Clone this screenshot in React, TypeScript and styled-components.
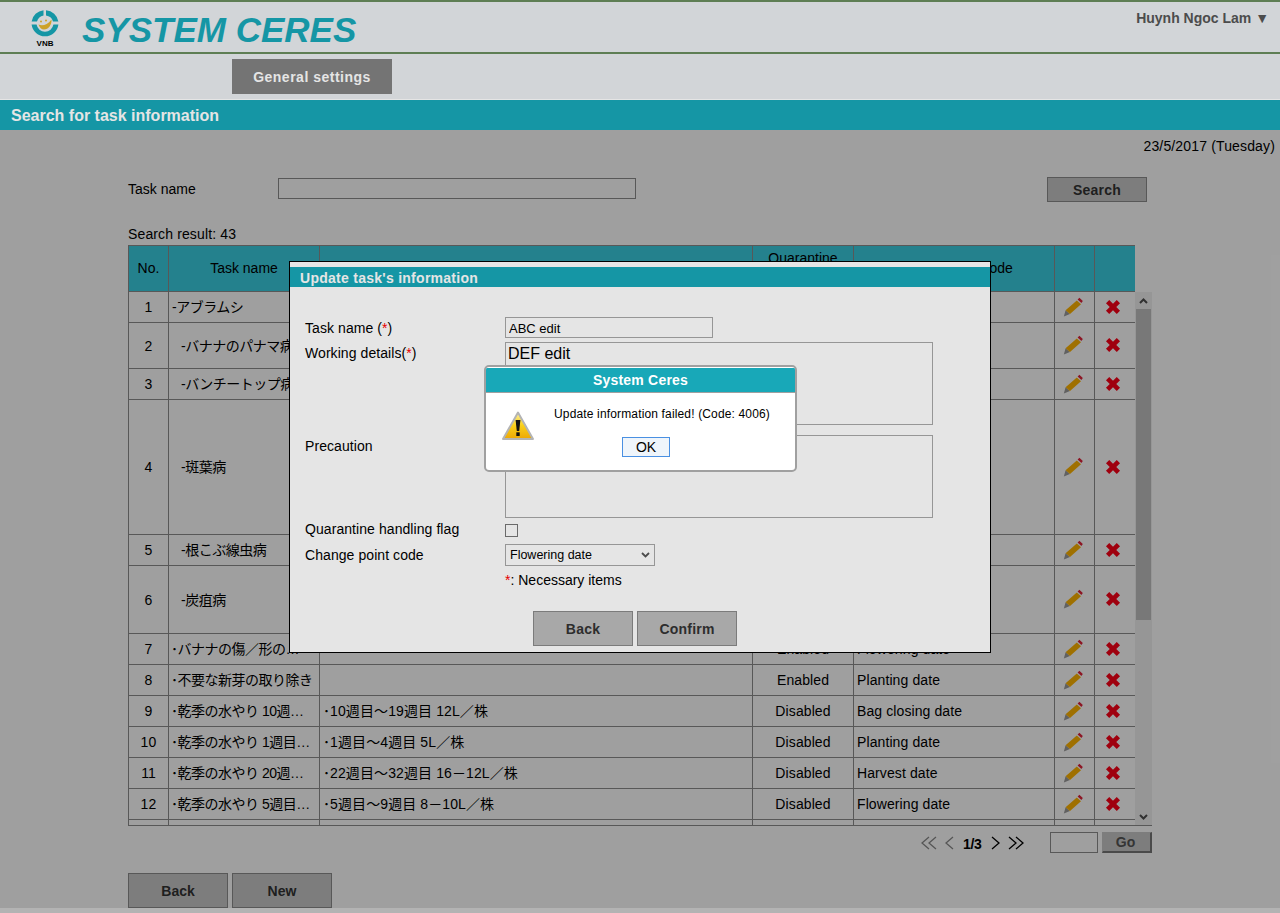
import styled, { createGlobalStyle } from 'styled-components';

const TEAL = '#18a8b8';
const FONT = '"Liberation Sans", Arial, sans-serif';
const JP_FONT = '"Liberation Sans", "Noto Sans CJK JP", sans-serif';
const SELECT_ARROW =
  "url(\"data:image/svg+xml,%3Csvg xmlns='http://www.w3.org/2000/svg' width='9' height='6'%3E%3Cpath d='M1 1L4.5 4.5L8 1' fill='none' stroke='%23555' stroke-width='1.8'/%3E%3C/svg%3E\")";

const GlobalStyle = createGlobalStyle`
  html, body {
    margin: 0;
    padding: 0;
    height: 913px;
    overflow: hidden;
    background: #fff;
    font-family: ${FONT};
    font-size: 14px;
    color: #000;
  }
  * { box-sizing: border-box; }
`;

const Page = styled.div`
  position: relative;
  width: 1280px;
  height: 913px;
  overflow: hidden;
`;

const Header = styled.header`
  display: flex;
  align-items: flex-start;
  height: 54px;
  background: #eaeef1;
  border-top: 2px solid #698d5e;
  border-bottom: 2px solid #698d5e;
`;

const LogoBox = styled.div`
  display: flex;
  flex-direction: column;
  align-items: center;
  width: 30px;
  margin: 7px 0 0 30px;
`;

const LogoLabel = styled.span`
  font-size: 8px;
  font-weight: 700;
  line-height: 8px;
  margin-top: 1px;
`;

const SystemTitle = styled.h1`
  margin: 7px 0 0 22px;
  font-size: 35px;
  line-height: 42px;
  font-style: italic;
  font-weight: 700;
  color: ${TEAL};
`;

const UserMenu = styled.div`
  margin: 8px 11px 0 auto;
  font-size: 14px;
  font-weight: 700;
  line-height: 16px;
  color: #555;
`;

const NavBar = styled.nav`
  height: 45px;
  padding: 5px 0 0 232px;
  background: #eaeef1;
`;

const NavButton = styled.button`
  width: 160px;
  height: 35px;
  border: 0;
  background: #828282;
  color: #fff;
  font: 700 14px ${FONT};
  letter-spacing: 0.5px;
`;

const TitleBar = styled.div`
  height: 31px;
  border-top: 1px solid #fff;
  padding-left: 11px;
  background: ${TEAL};
  color: #fff;
  font-size: 16px;
  font-weight: 700;
  line-height: 31px;
`;

const Main = styled.main`
  height: 778px;
  padding-left: 128px;
  background: #fff;
`;

const DateLine = styled.div`
  height: 47px;
  padding: 8px 5px 0 0;
  line-height: 16px;
  letter-spacing: 0.15px;
  text-align: right;
`;

const SearchRow = styled.div`
  display: flex;
  align-items: flex-start;
  width: 1019px;
  height: 25px;
`;

const SearchLabel = styled.label`
  width: 150px;
  line-height: 24px;
`;

const SearchInput = styled.input`
  width: 358px;
  height: 21px;
  margin-top: 1px;
  border: 1px solid #8f8f8f;
  background: #fff;
`;

const SearchButton = styled.button`
  width: 100px;
  height: 25px;
  margin-left: auto;
  border: 1px solid #8f8f8f;
  background: #c9c9c9;
  color: #333;
  font: 700 14px ${FONT};
  letter-spacing: 0.2px;
`;

const ResultCount = styled.div`
  height: 19px;
  margin-top: 24px;
  line-height: 16px;
  letter-spacing: 0.13px;
`;

const TableArea = styled.div`
  display: flex;
  align-items: flex-end;
  width: 1024px;
  height: 581px;
  border-bottom: 1px solid #8f8f8f;
`;

const TableClip = styled.div`
  width: 1007px;
  height: 580px;
  overflow: hidden;
`;

const TaskTable = styled.table`
  width: 1007px;
  table-layout: fixed;
  border-collapse: collapse;
  font-family: ${JP_FONT};
`;

const HeadCell = styled.th`
  height: 46px;
  padding: 0;
  border: 1px solid #8f8f8f;
  background: #3bcee1;
  font-weight: 400;
  line-height: 21px;
  text-align: center;
`;

const Cell = styled.td<{ $center?: boolean }>`
  padding: 0 3px;
  border: 1px solid #8f8f8f;
  white-space: nowrap;
  overflow: hidden;
  letter-spacing: 0.1px;
  text-align: ${(props) => (props.$center ? 'center' : 'left')};
`;

const NameCell = styled(Cell)<{ $indent: number }>`
  padding: 0 0 2px ${(props) => props.$indent}px;
  letter-spacing: -0.5px;
`;

const WorkCell = styled(Cell)`
  padding: 0 0 2px 3px;
`;

const IconCell = styled.td<{ $shift: number }>`
  padding: 2px ${(props) => props.$shift}px 0 0;
  border: 1px solid #8f8f8f;
  text-align: center;
`;

const ScrollBar = styled.div`
  display: flex;
  flex-direction: column;
  width: 17px;
  height: 533px;
  background: #f1f1f1;
`;

const ScrollArrow = styled.div`
  display: flex;
  align-items: center;
  justify-content: center;
  height: 17px;
`;

const ScrollThumb = styled.div`
  height: 311px;
  margin: 0 1px;
  background: #c1c1c1;
`;

const ScrollSpace = styled.div`
  flex: 1;
`;

const PagerRow = styled.div`
  display: flex;
  align-items: center;
  width: 1024px;
  height: 21px;
  margin-top: 6px;
  padding-left: 793px;
`;

const PageNumber = styled.span`
  width: 20px;
  margin: 2px 8px 0;
  font-size: 14px;
  font-weight: 700;
  white-space: nowrap;
  letter-spacing: -0.3px;
`;

const PagerIcon = styled.svg<{ $gap?: number }>`
  display: block;
  margin-right: ${(props) => props.$gap ?? 0}px;
`;

const PageInput = styled.input`
  width: 48px;
  height: 21px;
  margin-left: 25px;
  border: 1px solid #8f8f8f;
  background: #fff;
`;

const GoButton = styled.button`
  width: 50px;
  height: 21px;
  margin-left: 4px;
  padding: 0 2px 0 0;
  border: 1px solid #c9c9c9;
  border-right: 2px solid #777;
  border-bottom: 2px solid #777;
  background: #c9c9c9;
  color: #555;
  font: 700 14px ${FONT};
`;

const ActionRow = styled.div`
  display: flex;
  gap: 4px;
  margin-top: 20px;
`;

const ActionButton = styled.button`
  width: 100px;
  height: 35px;
  border: 1px solid #8f8f8f;
  background: #c9c9c9;
  color: #333;
  font: 700 14px ${FONT};
`;

const PageFoot = styled.div`
  height: 5px;
  background: #c8c8c8;
`;

const ModalShade = styled.div`
  position: absolute;
  left: 0;
  right: 0;
  top: 130px;
  height: 778px;
  background: rgba(0, 0, 0, 0.3);
`;

const Modal = styled.section`
  position: absolute;
  left: 289px;
  top: 261px;
  width: 702px;
  height: 392px;
  padding-top: 5px;
  border: 1px solid #000;
  background: #fff;
`;

const ModalTitle = styled.h2`
  height: 20px;
  margin: 0;
  padding-left: 10px;
  background: ${TEAL};
  color: #fff;
  font-size: 14px;
  font-weight: 700;
  letter-spacing: 0.27px;
  line-height: 22px;
`;

const ModalForm = styled.div`
  padding: 30px 0 0 15px;
`;

const FieldRow = styled.div<{ $height: number }>`
  display: flex;
  align-items: flex-start;
  height: ${(props) => props.$height}px;
`;

const FieldLabel = styled.label<{ $top?: number }>`
  width: 200px;
  margin-top: ${(props) => props.$top ?? 3}px;
  line-height: 16px;
  letter-spacing: 0.07px;
`;

const Required = styled.span`
  color: #f00;
`;

const TextField = styled.input`
  width: 208px;
  height: 21px;
  padding: 1px 3px 0;
  border: 1px solid #a8a8a8;
  background: #fff;
  font: 13px ${FONT};
  color: #000;
`;

const TextBlock = styled.textarea`
  width: 428px;
  height: 83px;
  padding: 2px;
  border: 1px solid #a8a8a8;
  background: #fff;
  font: 16px ${FONT};
  color: #000;
  resize: none;
`;

const CheckBox = styled.input`
  width: 13px;
  height: 13px;
  margin: 1px 0 0;
  appearance: none;
  border: 1px solid #767676;
  background: #fff;
`;

const SelectBox = styled.select`
  width: 150px;
  height: 22px;
  padding: 0 0 0 4px;
  appearance: none;
  border: 1px solid #a8a8a8;
  border-radius: 0;
  background: #fff ${SELECT_ARROW} no-repeat right 4px center;
  font: 12.5px ${FONT};
  color: #000;
`;

const NoteLine = styled.div`
  margin: 6px 0 0 200px;
  line-height: 16px;
`;

const ModalActions = styled.div`
  display: flex;
  gap: 4px;
  margin: 23px 0 0 228px;
`;

const ModalButton = styled.button`
  width: 100px;
  height: 35px;
  border: 1px solid #8a8a8a;
  background: #bcbcbc;
  color: #333;
  font: 700 14px ${FONT};
  letter-spacing: 0.2px;
`;

const AlertShade = styled.div`
  position: absolute;
  inset: 0;
  background: rgba(0, 0, 0, 0.1);
`;

const AlertBox = styled.div`
  position: absolute;
  left: 484px;
  top: 365px;
  width: 313px;
  height: 107px;
  padding-top: 1px;
  border: 2px solid #a0a0a0;
  border-radius: 5px;
  background: #fff;
  overflow: hidden;
`;

const AlertTitle = styled.div`
  height: 25px;
  border-bottom: 1px solid #a0a0a0;
  background: ${TEAL};
  color: #fff;
  font-size: 14px;
  font-weight: 700;
  letter-spacing: 0.2px;
  line-height: 24px;
  text-align: center;
`;

const AlertBody = styled.div`
  display: flex;
  align-items: flex-start;
  padding: 14px 0 0 16px;
`;

const AlertIcon = styled.svg`
  display: block;
  margin-top: 4px;
`;

const AlertContent = styled.div`
  display: flex;
  flex-direction: column;
  align-items: center;
  width: 256px;
`;

const AlertText = styled.div`
  font-size: 12px;
  letter-spacing: 0.15px;
  line-height: 14px;
`;

const AlertButton = styled.button`
  width: 48px;
  height: 20px;
  margin: 16px 32px 0 0;
  padding: 0;
  border: 1px solid #4a90e2;
  background: #eff5fb;
  font: 14px ${FONT};
  color: #000;
`;

const Row = styled.tr<{ $height: number }>`
  height: ${(props) => props.$height}px;
`;

function LogoMark() {
  return (
    <svg width="30" height="30" viewBox="0 0 30 30">
      <path d="M13.5 1.2A13.5 13.5 0 0 0 1.6 12.5L7 12.5A8.5 8.5 0 0 1 13.5 6.6Z" fill="#18a8b8" />
      <path d="M16 1.2A13.5 13.5 0 0 1 28.4 12.5L23 12.5A8.5 8.5 0 0 0 16 6.6Z" fill="#18a8b8" />
      <path d="M1.6 15.5A13.5 13.5 0 0 0 28.4 15.5L23.4 15.5A8.5 8.5 0 0 1 6.6 15.5Z" fill="#18a8b8" />
      <path d="M8.5 15.5C12 17 17 16.5 21.5 10.5C22 15.5 18.5 20.5 14 20.5C11.5 20.5 9.5 18.5 8.5 15.5Z" fill="#e5b52c" />
      <circle cx="11" cy="12.5" r="1" fill="#e5b52c" />
      <circle cx="16" cy="11.5" r="1" fill="#e5b52c" />
    </svg>
  );
}

function PencilIcon() {
  return (
    <svg width="20" height="20" viewBox="0 0 20 20">
      <path d="M0.8 19.5L2.6 13.2L7 17Z" fill="#9c9c9c" />
      <path d="M2.6 13.2L13.8 3.4L18 7.2L7 17Z" fill="#ffb400" />
      <path d="M14.6 2.6L16.4 0.8L19.8 3.9L18.4 5.9Z" fill="#e0243c" />
    </svg>
  );
}

function DeleteIcon() {
  return (
    <svg width="18" height="18" viewBox="0 0 18 18">
      <path d="M3.6 3.6L14.4 14.4M14.4 3.6L3.6 14.4" fill="none" stroke="#ff0018" strokeWidth="4.6" />
    </svg>
  );
}

function WarningIcon() {
  return (
    <AlertIcon width="32" height="30" viewBox="0 0 32 30">
      <defs>
        <linearGradient id="warn-fill" x1="0" y1="0" x2="0" y2="1">
          <stop offset="0" stopColor="#fdf0a0" />
          <stop offset="0.5" stopColor="#f9cf1a" />
          <stop offset="1" stopColor="#eda705" />
        </linearGradient>
      </defs>
      <path d="M16 1.5L31 28H1Z" fill="url(#warn-fill)" stroke="#b4b4b4" strokeWidth="2" strokeLinejoin="round" />
      <path d="M13.6 9H18.4L17.2 20H14.8Z" fill="#111" />
      <rect x="14.3" y="21.3" width="3.4" height="3.7" fill="#111" />
    </AlertIcon>
  );
}

function Chevrons({ count, left, color, gap }: { count: number; left?: boolean; color: string; gap: number }) {
  const width = count === 2 ? 17 : 10;
  const points = count === 2 ? [1, 8] : [1];
  return (
    <PagerIcon $gap={gap} width={width} height="14" viewBox={`0 0 ${width} 14`}>
      {points.map((x) => (
        <path
          key={x}
          d={left ? `M${x + 7} 1L${x} 7L${x + 7} 13` : `M${x} 1L${x + 7} 7L${x} 13`}
          fill="none"
          stroke={color}
          strokeWidth="1.3"
        />
      ))}
    </PagerIcon>
  );
}

function ArrowGlyph({ down }: { down?: boolean }) {
  return (
    <svg width="9" height="6" viewBox="0 0 9 6">
      <path d={down ? 'M1 1L4.5 4.5L8 1' : 'M1 5L4.5 1.5L8 5'} fill="none" stroke="#505050" strokeWidth="2" />
    </svg>
  );
}

const ROWS = [
  { no: '1', height: 31, indent: 3, name: '-アブラムシ', work: '', flag: 'Disabled', code: 'Planting date' },
  { no: '2', height: 46, indent: 12, name: '-バナナのパナマ病', work: '', flag: 'Disabled', code: 'Planting date' },
  { no: '3', height: 31, indent: 12, name: '-バンチートップ病', work: '', flag: 'Disabled', code: 'Planting date' },
  { no: '4', height: 135, indent: 12, name: '-斑葉病', work: '', flag: 'Disabled', code: 'Planting date' },
  { no: '5', height: 31, indent: 12, name: '-根こぶ線虫病', work: '', flag: 'Disabled', code: 'Planting date' },
  { no: '6', height: 68, indent: 12, name: '-炭疽病', work: '', flag: 'Disabled', code: 'Planting date' },
  { no: '7', height: 31, indent: 2, name: '･バナナの傷／形の…', work: '', flag: 'Enabled', code: 'Flowering date' },
  { no: '8', height: 31, indent: 2, name: '･不要な新芽の取り除き', work: '', flag: 'Enabled', code: 'Planting date' },
  { no: '9', height: 31, indent: 2, name: '･乾季の水やり 10週…', work: '･10週目～19週目 12L／株', flag: 'Disabled', code: 'Bag closing date' },
  { no: '10', height: 31, indent: 2, name: '･乾季の水やり 1週目…', work: '･1週目～4週目 5L／株', flag: 'Disabled', code: 'Planting date' },
  { no: '11', height: 31, indent: 2, name: '･乾季の水やり 20週…', work: '･22週目～32週目 16－12L／株', flag: 'Disabled', code: 'Harvest date' },
  { no: '12', height: 31, indent: 2, name: '･乾季の水やり 5週目…', work: '･5週目～9週目 8－10L／株', flag: 'Disabled', code: 'Flowering date' },
];

export default function App(): JSX.Element {
  return (
    <Page>
      <GlobalStyle />
      <Header>
        <LogoBox>
          <LogoMark />
          <LogoLabel>VNB</LogoLabel>
        </LogoBox>
        <SystemTitle>SYSTEM CERES</SystemTitle>
        <UserMenu>Huynh Ngoc Lam ▼</UserMenu>
      </Header>
      <NavBar>
        <NavButton>General settings</NavButton>
      </NavBar>
      <TitleBar>Search for task information</TitleBar>
      <Main>
        <DateLine>23/5/2017 (Tuesday)</DateLine>
        <SearchRow>
          <SearchLabel>Task name</SearchLabel>
          <SearchInput />
          <SearchButton>Search</SearchButton>
        </SearchRow>
        <ResultCount>Search result: 43</ResultCount>
        <TableArea>
          <TableClip>
            <TaskTable>
              <colgroup>
                <col width="40" />
                <col width="151" />
                <col width="433" />
                <col width="101" />
                <col width="201" />
                <col width="40" />
                <col width="41" />
              </colgroup>
              <thead>
                <tr>
                  <HeadCell>No.</HeadCell>
                  <HeadCell>Task name</HeadCell>
                  <HeadCell>Working details</HeadCell>
                  <HeadCell>
                    Quarantine
                    <br />
                    handling flag
                  </HeadCell>
                  <HeadCell>Change point code</HeadCell>
                  <HeadCell />
                  <HeadCell />
                </tr>
              </thead>
              <tbody>
                {ROWS.map((row) => (
                  <Row key={row.no} $height={row.height}>
                    <Cell $center>{row.no}</Cell>
                    <NameCell $indent={row.indent}>{row.name}</NameCell>
                    <WorkCell>{row.work}</WorkCell>
                    <Cell $center>{row.flag}</Cell>
                    <Cell>{row.code}</Cell>
                    <IconCell $shift={4}>
                      <PencilIcon />
                    </IconCell>
                    <IconCell $shift={5}>
                      <DeleteIcon />
                    </IconCell>
                  </Row>
                ))}
                <Row $height={31}>
                  <Cell />
                  <Cell />
                  <Cell />
                  <Cell />
                  <Cell />
                  <Cell />
                  <Cell />
                </Row>
              </tbody>
            </TaskTable>
          </TableClip>
          <ScrollBar>
            <ScrollArrow>
              <ArrowGlyph />
            </ScrollArrow>
            <ScrollThumb />
            <ScrollSpace />
            <ScrollArrow>
              <ArrowGlyph down />
            </ScrollArrow>
          </ScrollBar>
        </TableArea>
        <PagerRow>
          <Chevrons count={2} left color="#8a8a8a" gap={7} />
          <Chevrons count={1} left color="#8a8a8a" gap={0} />
          <PageNumber>1/3</PageNumber>
          <Chevrons count={1} color="#000" gap={7} />
          <Chevrons count={2} color="#000" gap={0} />
          <PageInput />
          <GoButton>Go</GoButton>
        </PagerRow>
        <ActionRow>
          <ActionButton>Back</ActionButton>
          <ActionButton>New</ActionButton>
        </ActionRow>
      </Main>
      <PageFoot />
      <ModalShade />
      <Modal>
        <ModalTitle>Update task's information</ModalTitle>
        <ModalForm>
          <FieldRow $height={25}>
            <FieldLabel>
              Task name (<Required>*</Required>)
            </FieldLabel>
            <TextField defaultValue="ABC edit" />
          </FieldRow>
          <FieldRow $height={93}>
            <FieldLabel>
              Working details(<Required>*</Required>)
            </FieldLabel>
            <TextBlock defaultValue="DEF edit" />
          </FieldRow>
          <FieldRow $height={88}>
            <FieldLabel>Precaution</FieldLabel>
            <TextBlock />
          </FieldRow>
          <FieldRow $height={21}>
            <FieldLabel $top={-2}>Quarantine handling flag</FieldLabel>
            <CheckBox type="checkbox" />
          </FieldRow>
          <FieldRow $height={22}>
            <FieldLabel>Change point code</FieldLabel>
            <SelectBox defaultValue="Flowering date">
              <option>Flowering date</option>
            </SelectBox>
          </FieldRow>
          <NoteLine>
            <Required>*</Required>: Necessary items
          </NoteLine>
          <ModalActions>
            <ModalButton>Back</ModalButton>
            <ModalButton>Confirm</ModalButton>
          </ModalActions>
        </ModalForm>
      </Modal>
      <AlertShade />
      <AlertBox>
        <AlertTitle>System Ceres</AlertTitle>
        <AlertBody>
          <WarningIcon />
          <AlertContent>
            <AlertText>Update information failed! (Code: 4006)</AlertText>
            <AlertButton>OK</AlertButton>
          </AlertContent>
        </AlertBody>
      </AlertBox>
    </Page>
  );
}
